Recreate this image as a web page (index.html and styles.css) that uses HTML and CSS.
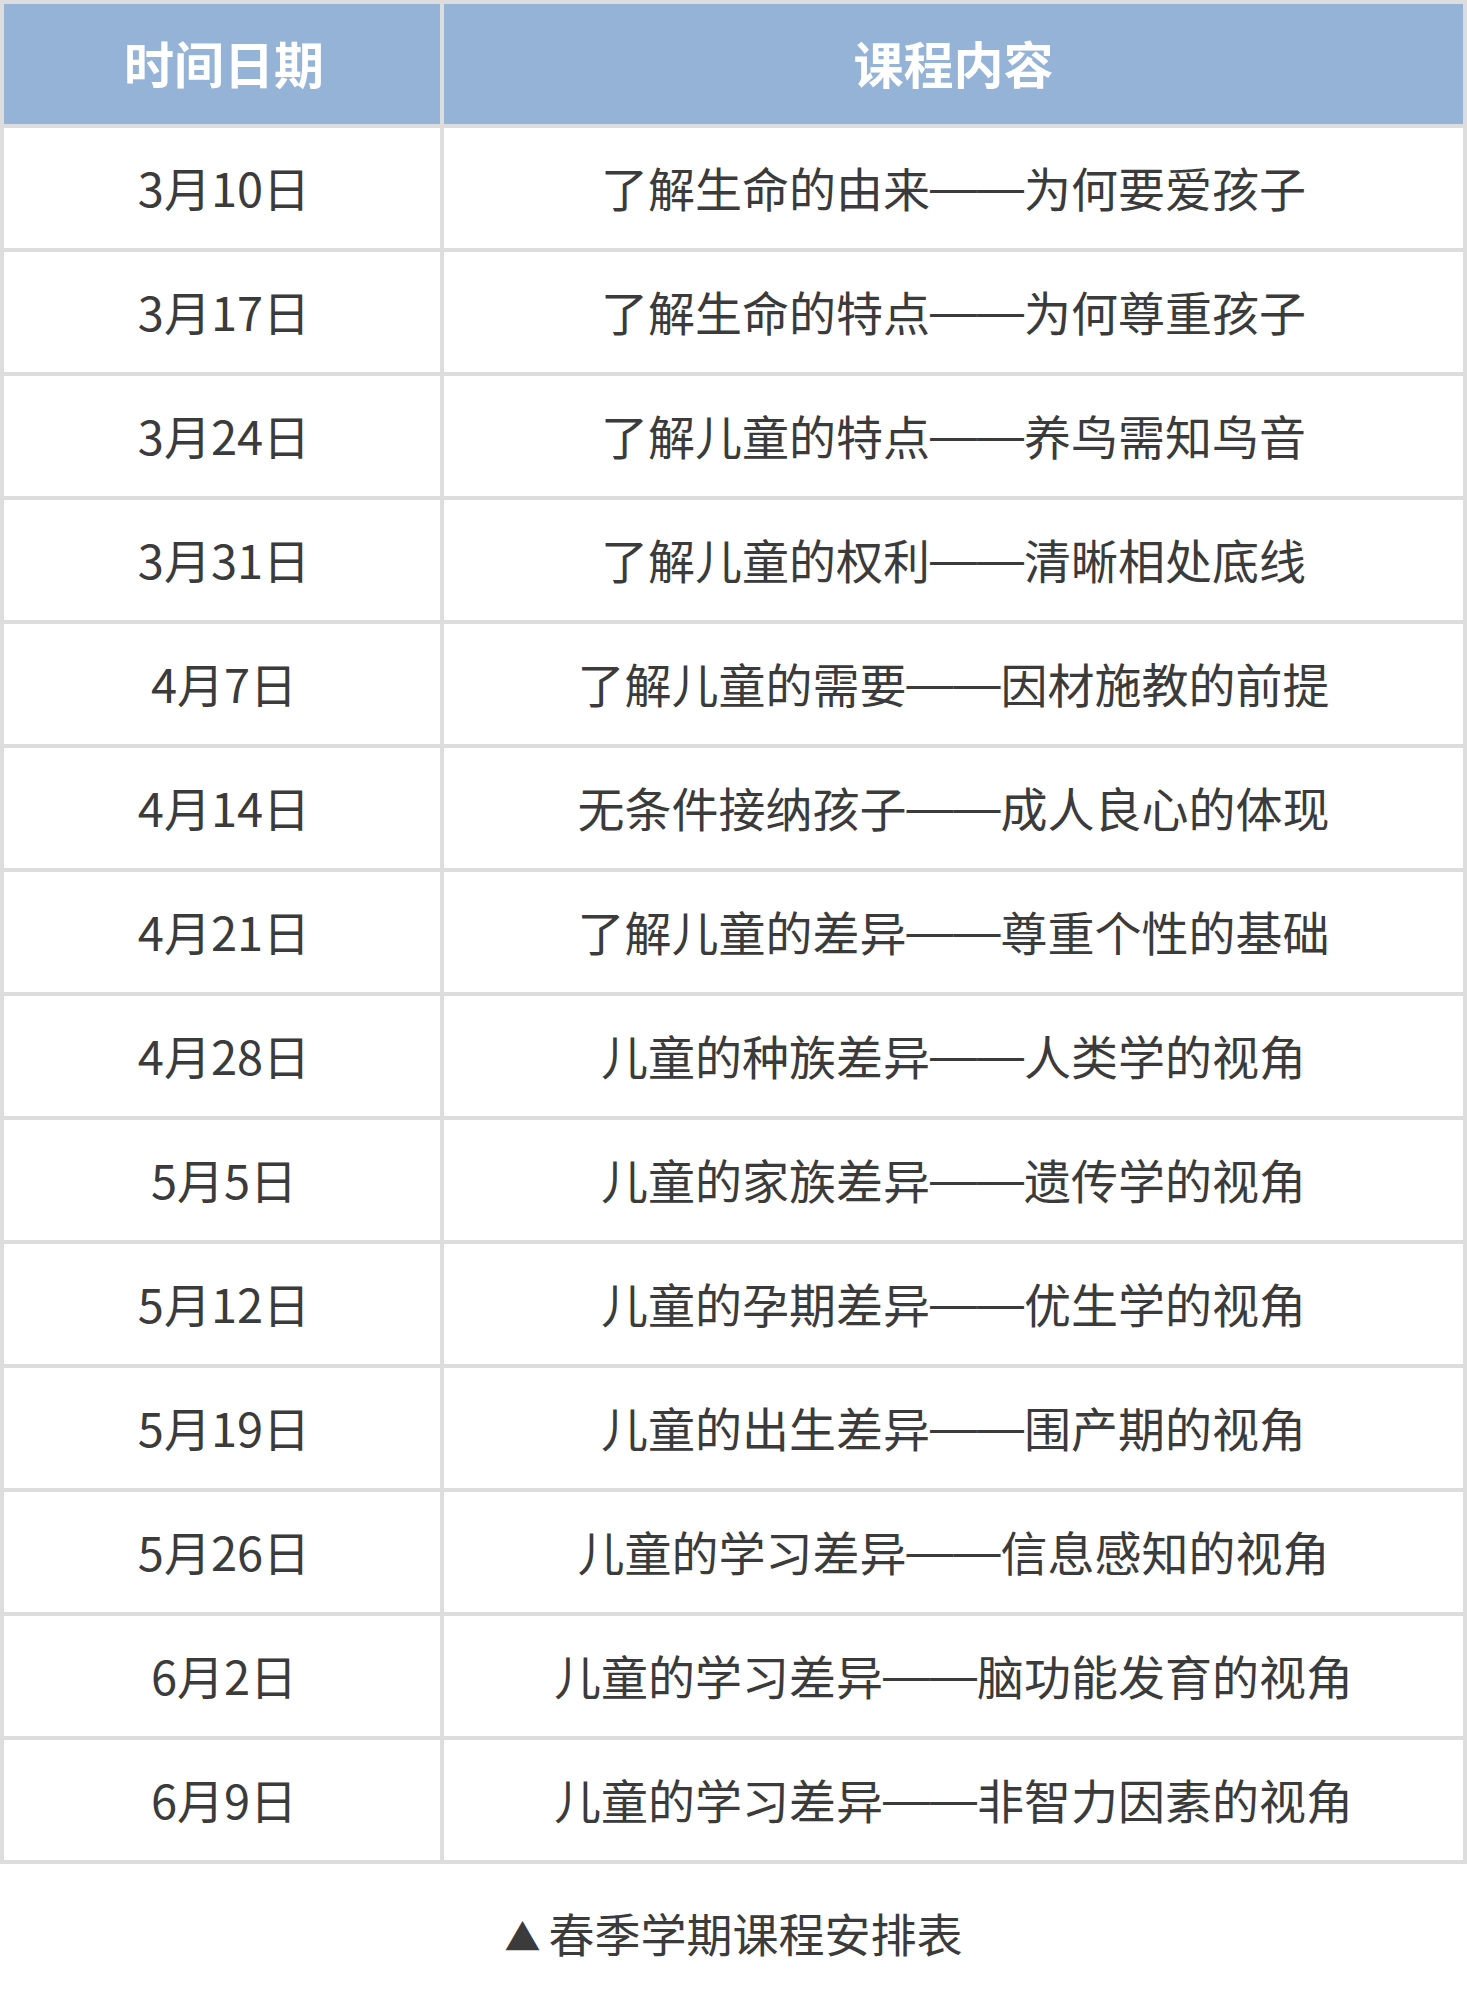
FILE: index.html
```html
<!DOCTYPE html>
<html lang="zh-CN">
<head>
<meta charset="utf-8">
<title>春季学期课程安排表</title>
<link rel="stylesheet" href="styles.css">
</head>
<body>
<div class="schedule">
  <div class="cell head date">时间日期</div>
  <div class="cell head">课程内容</div>
  <div class="cell date">3月10日</div>
  <div class="cell">了解生命的由来<span class="dash">——</span>为何要爱孩子</div>
  <div class="cell date">3月17日</div>
  <div class="cell">了解生命的特点<span class="dash">——</span>为何尊重孩子</div>
  <div class="cell date">3月24日</div>
  <div class="cell">了解儿童的特点<span class="dash">——</span>养鸟需知鸟音</div>
  <div class="cell date">3月31日</div>
  <div class="cell">了解儿童的权利<span class="dash">——</span>清晰相处底线</div>
  <div class="cell date">4月7日</div>
  <div class="cell">了解儿童的需要<span class="dash">——</span>因材施教的前提</div>
  <div class="cell date">4月14日</div>
  <div class="cell">无条件接纳孩子<span class="dash">——</span>成人良心的体现</div>
  <div class="cell date">4月21日</div>
  <div class="cell">了解儿童的差异<span class="dash">——</span>尊重个性的基础</div>
  <div class="cell date">4月28日</div>
  <div class="cell">儿童的种族差异<span class="dash">——</span>人类学的视角</div>
  <div class="cell date">5月5日</div>
  <div class="cell">儿童的家族差异<span class="dash">——</span>遗传学的视角</div>
  <div class="cell date">5月12日</div>
  <div class="cell">儿童的孕期差异<span class="dash">——</span>优生学的视角</div>
  <div class="cell date">5月19日</div>
  <div class="cell">儿童的出生差异<span class="dash">——</span>围产期的视角</div>
  <div class="cell date">5月26日</div>
  <div class="cell">儿童的学习差异<span class="dash">——</span>信息感知的视角</div>
  <div class="cell date">6月2日</div>
  <div class="cell">儿童的学习差异<span class="dash">——</span>脑功能发育的视角</div>
  <div class="cell date">6月9日</div>
  <div class="cell">儿童的学习差异<span class="dash">——</span>非智力因素的视角</div>
</div>
<p class="caption"><span class="tri">▲</span>春季学期课程安排表</p>
</body>
</html>
```
FILE: styles.css
```css
html, body {
  margin: 0;
  padding: 0;
  background: #ffffff;
}
body {
  font-family: "Noto Sans CJK SC", "Noto Sans", sans-serif;
  color: #3b3b3b;
}
.schedule {
  display: grid;
  grid-template-columns: 436px 1fr;
  grid-auto-rows: 120px;
  gap: 4px;
  padding: 4px;
  background: #dddddd;
}
.cell {
  background: #ffffff;
  display: flex;
  align-items: center;
  justify-content: center;
  padding-bottom: 4px;
  box-sizing: border-box;
  font-size: 47px;
  line-height: 1;
  white-space: nowrap;
}
.cell.date {
  padding-left: 4px;
}
.dash {
  font-family: "Liberation Sans", "DejaVu Sans", sans-serif;
  font-size: 47px;
}
.cell.head {
  background: #95b3d7;
  color: #ffffff;
  font-weight: 700;
  font-size: 50px;
}
.caption {
  margin: 44px 0 0;
  text-align: center;
  font-size: 46px;
  line-height: 48px;
}
.tri {
  font-size: 36px;
  margin-right: 8px;
  vertical-align: 1px;
}
```
